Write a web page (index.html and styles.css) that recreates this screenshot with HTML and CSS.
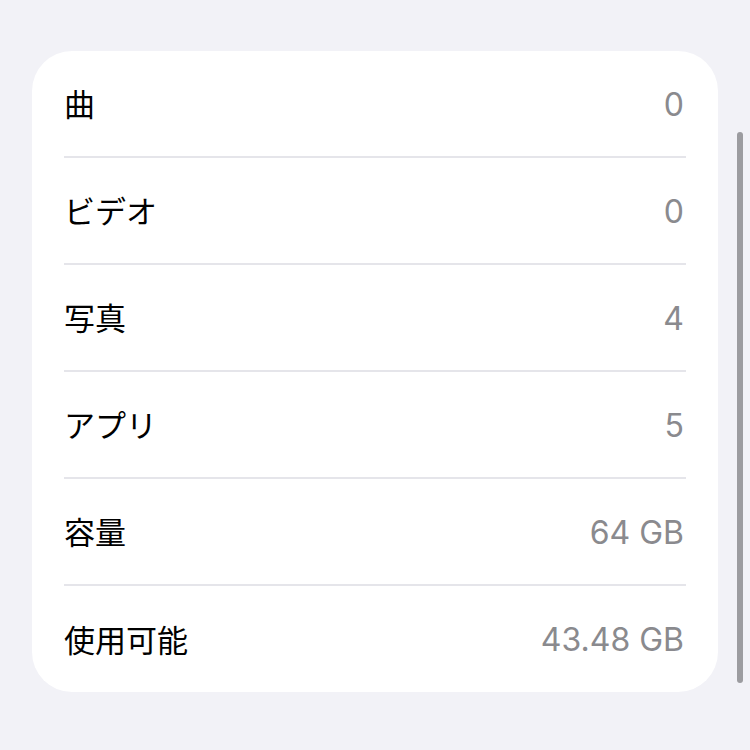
FILE: index.html
```html
<!DOCTYPE html>
<html lang="ja">

<head>
    <meta charset="UTF-8">
    <meta name="viewport" content="width=device-width, initial-scale=1.0">
    <title>情報</title>

    <link rel="stylesheet" href="styles.css">
</head>

<body>

    <div class="list">
        <div class="list__row">
            <span class="list__label">曲</span>
            <span class="list__value">0</span>
        </div>
        <div class="list__row">
            <span class="list__label">ビデオ</span>
            <span class="list__value">0</span>
        </div>
        <div class="list__row">
            <span class="list__label">写真</span>
            <span class="list__value">4</span>
        </div>
        <div class="list__row">
            <span class="list__label">アプリ</span>
            <span class="list__value">5</span>
        </div>
        <div class="list__row">
            <span class="list__label">容量</span>
            <span class="list__value">64 GB</span>
        </div>
        <div class="list__row">
            <span class="list__label">使用可能</span>
            <span class="list__value">43.48 GB</span>
        </div>
    </div>
    <!--/list-->

    <div class="scrollbar"></div>

</body>

</html>
```

FILE: styles.css
```css
body {
    margin: 0;
    padding: 51px 32px 0;
    background: #f2f2f7;
    font-family: Inter, "Noto Sans CJK JP", sans-serif;
}

.list {
    display: flex;
    flex-direction: column;
    background: #fff;
    border-radius: 40px;
    width: 686px;
}

.list__row {
    display: flex;
    justify-content: space-between;
    align-items: center;
    box-sizing: border-box;
    height: 107px;
    margin: 0 32px;
    padding: 3px 2px 0 0;
    border-bottom: 2px solid #e5e5ea;
}

.list__row:last-child {
    height: 106px;
    border-bottom: 0;
}

.list__label {
    font-size: 31px;
    line-height: 1.2;
    color: #000;
}

.list__value {
    font-family: Inter, sans-serif;
    font-size: 32px;
    line-height: 1.2;
    color: #8a8a8e;
}

/* overlay scroll indicator */
.scrollbar {
    position: fixed;
    top: 132px;
    right: 7px;
    width: 6px;
    height: 551px;
    border-radius: 3px;
    background: #9c9ca0;
}
```
